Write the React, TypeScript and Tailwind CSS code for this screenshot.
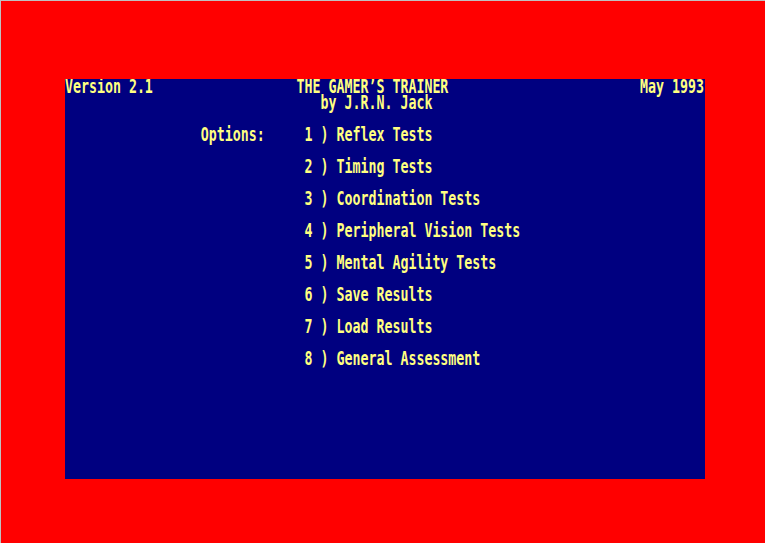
import React from 'react';

// 80 x 25 text screen, each cell 8 x 16 px
const pad = (s: string, col: number) => ' '.repeat(col) + s;

const options = [
  'Reflex Tests',
  'Timing Tests',
  'Coordination Tests',
  'Peripheral Vision Tests',
  'Mental Agility Tests',
  'Save Results',
  'Load Results',
  'General Assessment',
];

const buildLines = (): string[] => {
  const lines: string[] = Array(25).fill('');
  const title = 'THE GAMER\u2019S TRAINER';
  let top = 'Version 2.1'.padEnd(29, ' ') + title;
  top = top.padEnd(72, ' ') + 'May 1993';
  lines[0] = top;
  lines[1] = pad('by J.R.N. Jack', 32);
  options.forEach((opt, i) => {
    const prefix = i === 0 ? pad('Options:', 17).padEnd(30, ' ') : ' '.repeat(30);
    lines[3 + i * 2] = prefix + `${i + 1} ) ${opt}`;
  });
  return lines;
};

const ScreenLine: React.FC<{ text: string }> = ({ text }) => (
  <div className="h-[16px] whitespace-pre leading-[16px]">
    <span className="inline-block h-[16px] origin-center scale-y-[1.4]">{text || ' '}</span>
  </div>
);

const App: React.FC = () => {
  const lines = buildLines();
  return (
    <div className="box-border h-[543px] w-full overflow-hidden border-l border-t border-[#c0c0c0] bg-[#ff0000] pl-[64px] pt-[78px]">
      <div className="h-[400px] w-[640px] overflow-hidden bg-[#000080] font-['DejaVu_Sans_Mono',monospace] text-[13.28px] font-bold text-[#ffff80]">
        {lines.map((l, i) => (
          <ScreenLine key={i} text={l} />
        ))}
      </div>
    </div>
  );
};

export default App;
